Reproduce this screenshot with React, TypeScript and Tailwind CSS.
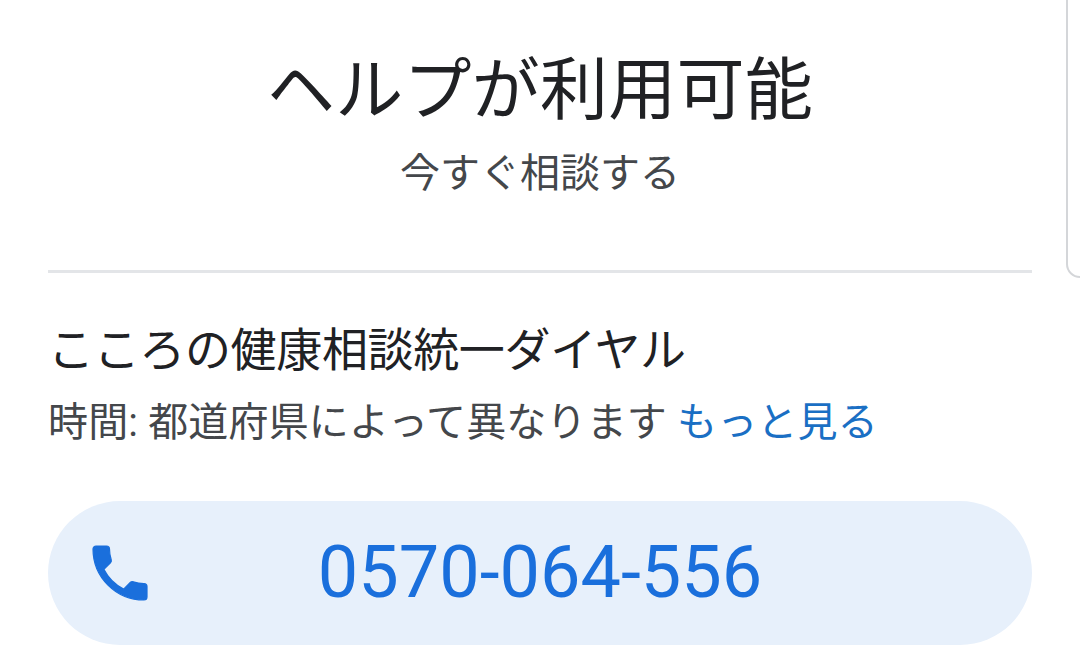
const font = "font-['Roboto','Noto_Sans_CJK_JP',sans-serif]";

function PhoneIcon() {
  return (
    <svg viewBox="0 0 24 24" className="h-[72px] w-[72px] fill-[#1a6fdc] stroke-[#1a6fdc] stroke-[0.4]">
      <path d="M6.62 10.79c1.44 2.83 3.76 5.14 6.59 6.59l2.2-2.2c.27-.27.67-.36 1.02-.24 1.12.37 2.33.57 3.57.57.55 0 1 .45 1 1V20c0 .55-.45 1-1 1-9.39 0-17-7.61-17-17 0-.55.45-1 1-1h3.5c.55 0 1 .45 1 1 0 1.25.2 2.45.57 3.57.11.35.03.74-.25 1.02l-2.2 2.2z" />
    </svg>
  );
}

export default function App() {
  return (
    <div className={`relative h-[671px] w-[1080px] overflow-hidden bg-white px-12 ${font}`}>
      <div className="absolute right-[-20px] top-[-20px] h-[298px] w-[34px] rounded-[14px] border-2 border-[#d4d6d9]" />
      <div className="flex h-[273px] flex-col items-center border-b-[3px] border-[#e3e5e8] pt-[48px]">
        <h1 className="text-[68px] leading-[86px] font-normal tracking-[0.25px] text-[#202124]">ヘルプが利用可能</h1>
        <p className="mt-[15px] text-[40px] leading-[50px] text-[#44474b]">今すぐ相談する</p>
      </div>
      <p className="mt-[44px] text-[46px] leading-[66px] tracking-[-0.35px] text-[#202124]">こころの健康相談統一ダイヤル</p>
      <p className="mt-[15px] text-[40px] leading-[50px] tracking-[0.15px] text-[#44474b]">
        時間: 都道府県によって異なります <span className="text-[#1a6fc4]">もっと見る</span>
      </p>
      <div className="relative mt-[53px] flex h-[144px] items-center justify-center rounded-[72px] bg-[#e7f0fb]">
        <div className="absolute left-[36px] top-[36px]">
          <PhoneIcon />
        </div>
        <span className="text-[72px] leading-none text-[#1a6fdc]">0570-064-556</span>
      </div>
    </div>
  );
}
